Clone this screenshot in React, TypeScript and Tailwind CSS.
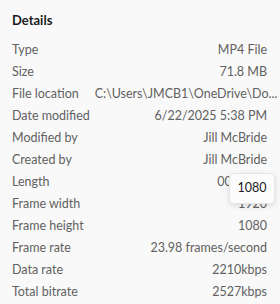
import React from "react";

const rows: [string, string][] = [
  ["Type", "MP4 File"],
  ["Size", "71.8 MB"],
  ["File location", "C:\\Users\\JMCB1\\OneDrive\\Do..."],
  ["Date modified", "6/22/2025 5:38 PM"],
  ["Modified by", "Jill McBride"],
  ["Created by", "Jill McBride"],
  ["Length", "00:02:14"],
  ["Frame width", "1920"],
  ["Frame height", "1080"],
  ["Frame rate", "23.98 frames/second"],
  ["Data rate", "2210kbps"],
  ["Total bitrate", "2527kbps"],
];

export default function App() {
  return (
    <div
      className="relative w-[280px] h-[304px] bg-[#f9f9f9] pl-3 pr-[13px] pt-[11px] text-[12.5px] text-[#616161]"
      style={{ fontFamily: 'Lato, "Noto Sans", sans-serif' }}
    >
      <div className="h-[18px] leading-[18px] text-[13px] font-bold text-[#1b1b1b]">Details</div>
      <div className="mt-[10px] flex flex-col">
        {rows.map(([k, v]) => (
          <div key={k} className="flex h-[22px] items-center justify-between leading-[16px] whitespace-nowrap">
            <span className="shrink-0">{k}</span>
            <span className="pl-4">{v}</span>
          </div>
        ))}
      </div>
      <div className="absolute left-[229px] top-[173px] w-[46px] h-[31px] rounded-[5px] bg-[#fcfcfc] border border-[#e6e6e6] shadow-[0_2px_6px_rgba(0,0,0,0.12)] flex items-center justify-center text-[12.5px] text-[#1b1b1b]">
        1080
      </div>
    </div>
  );
}
